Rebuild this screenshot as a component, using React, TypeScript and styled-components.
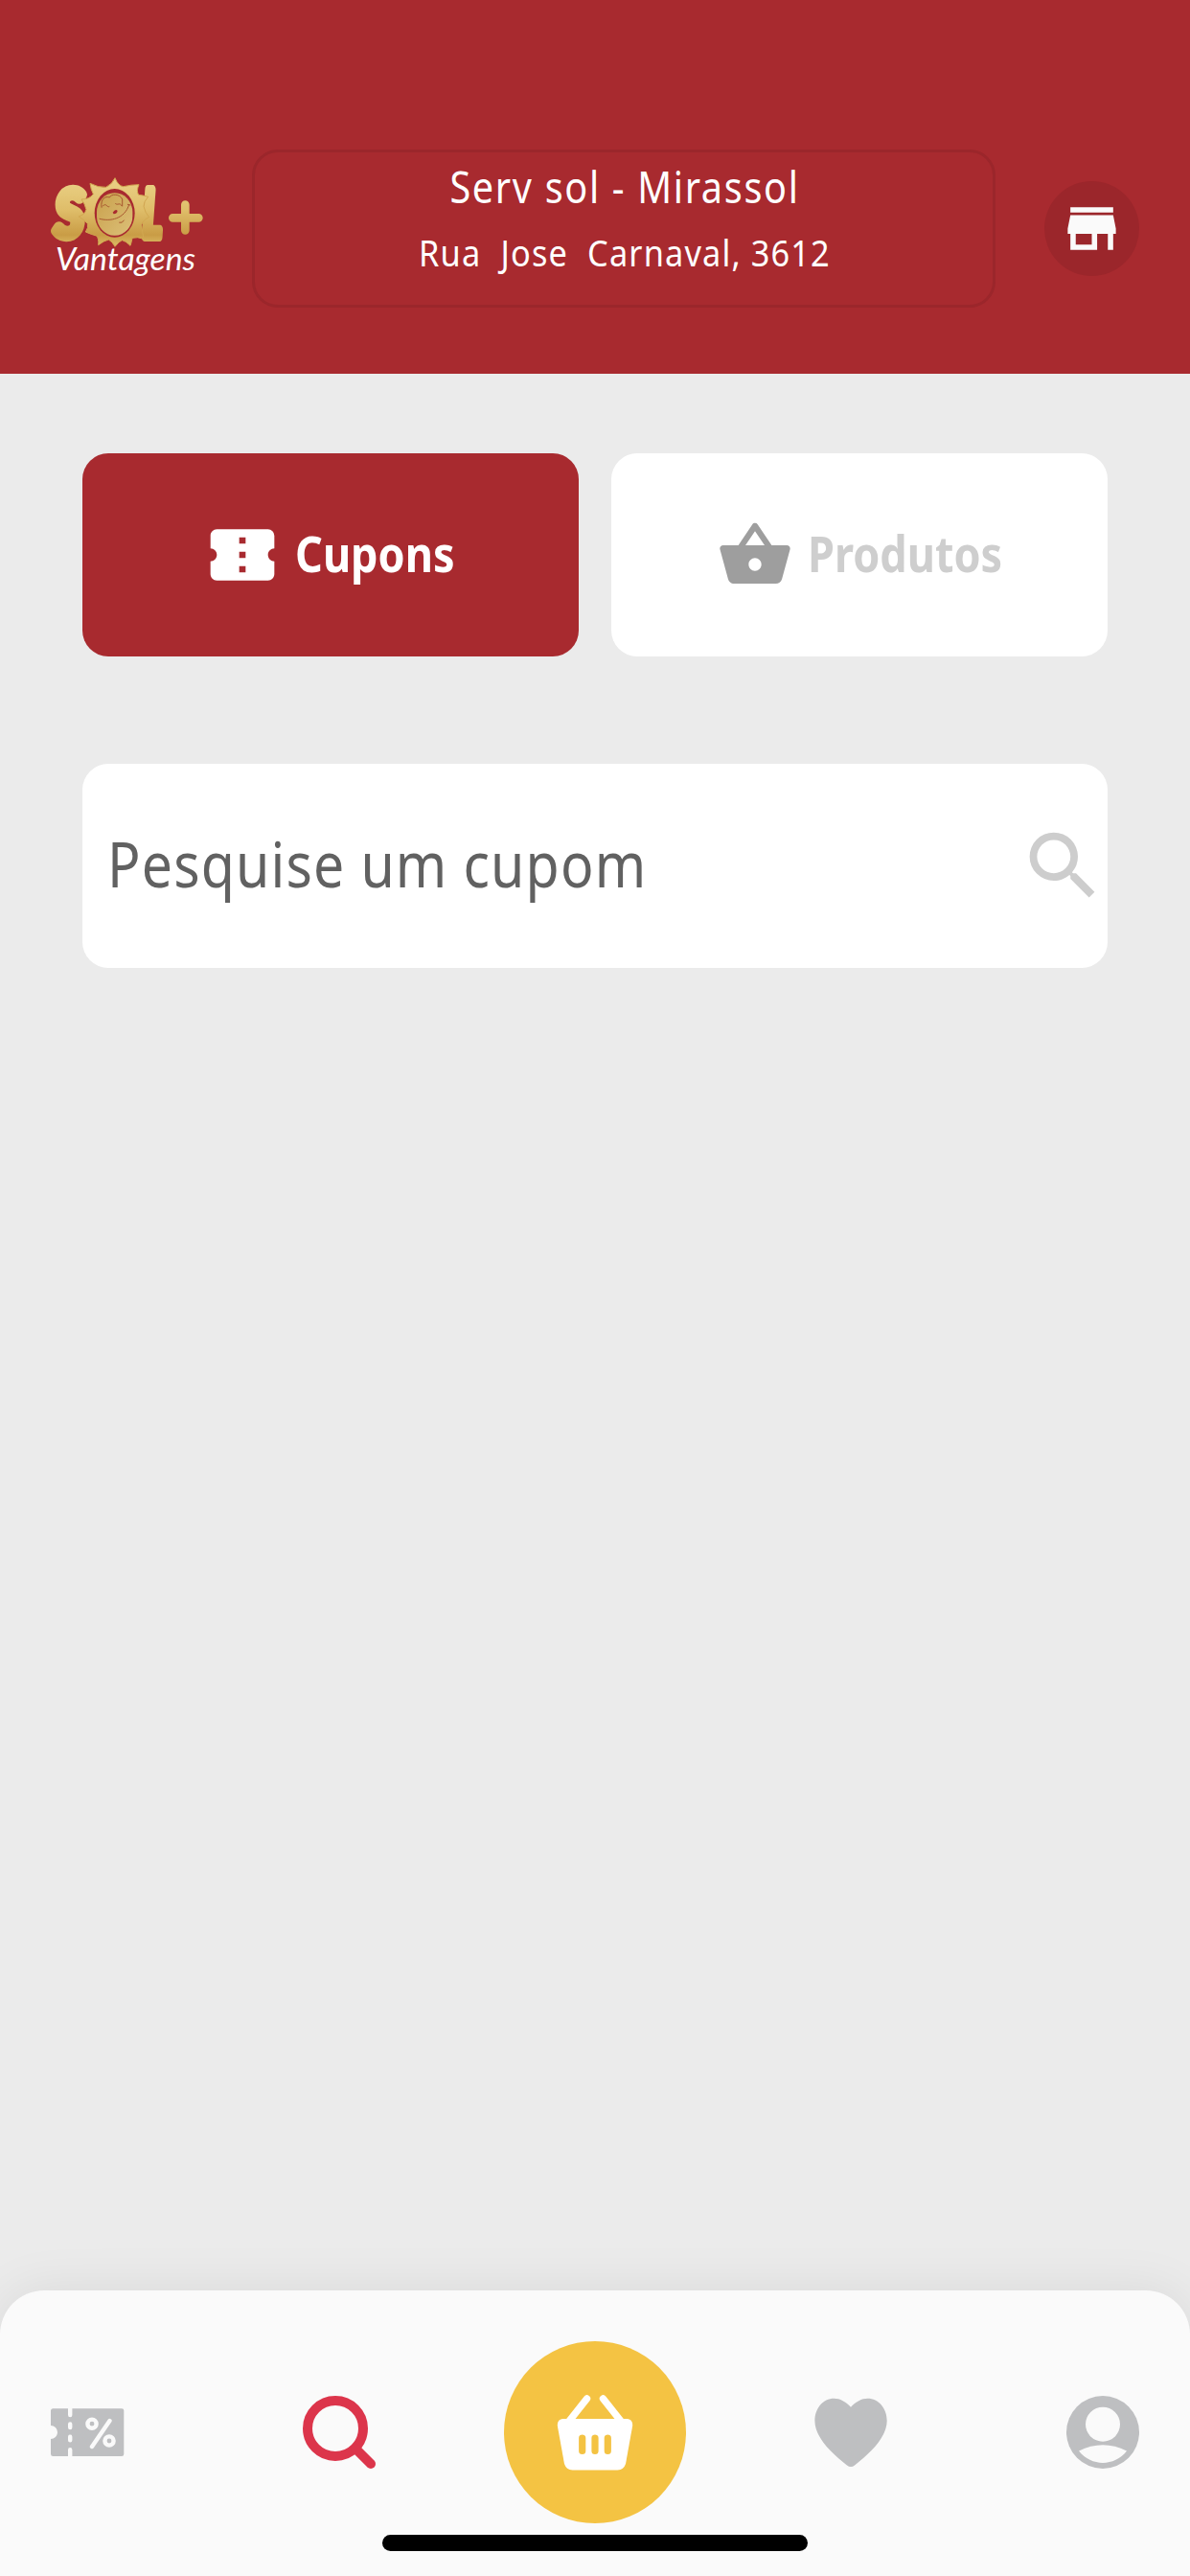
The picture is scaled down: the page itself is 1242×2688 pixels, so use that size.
import { FC } from 'react';
import styled, { createGlobalStyle } from 'styled-components';
import { MdConfirmationNumber, MdSearch, MdShoppingBasket, MdStore } from 'react-icons/md';

const colors = {
    primary: '#a82a2f',
    primaryDark: '#9b262b',
    background: '#ebebeb',
    surface: '#fafafa',
    accent: '#f4c343',
    active: '#dc354b',
    inactive: '#bebfc1',
};

const GlobalStyle = createGlobalStyle`
    * {
        box-sizing: border-box;
    }

    body {
        margin: 0;
        background: ${colors.background};
        font-family: 'Noto Sans', 'Open Sans', sans-serif;
    }
`;

const Screen = styled.div`
    display: flex;
    flex-direction: column;
    width: 1242px;
    height: 2688px;
    overflow: hidden;
    background: ${colors.background};
`;

const Header = styled.header`
    display: flex;
    align-items: flex-start;
    height: 389.5px;
    padding: 156px 53px 0 50px;
    background: ${colors.primary};
`;

const LogoLink = styled.a`
    display: flex;
    width: 166px;
    height: 115px;
    margin: 24px 47px 0 0;
`;

const StoreBox = styled.div`
    width: 776px;
    height: 165px;
    padding-left: 2px;
    border: 3px solid ${colors.primaryDark};
    border-radius: 27px;
    color: white;
    text-align: center;
    white-space: pre;
`;

const StoreName = styled.div`
    font-size: 45px;
    line-height: 72px;
    letter-spacing: 1.9px;
    transform: scaleX(0.88);
`;

const StoreAddress = styled.div`
    font-size: 39px;
    line-height: 63px;
    letter-spacing: 1.3px;
    transform: scaleX(0.88);
`;

const StoreButton = styled.button`
    display: flex;
    align-items: center;
    justify-content: center;
    width: 99px;
    height: 99px;
    margin: 33px 0 0 auto;
    padding: 0;
    border: none;
    border-radius: 50%;
    background: ${colors.primaryDark};
    color: ${colors.surface};
    font-size: 67px;
`;

const Content = styled.main`
    flex: 1;
    padding: 83px 86px 0;
`;

const Tabs = styled.div`
    display: grid;
    grid-template-columns: 1fr 1fr;
    gap: 34px;
`;

const Tab = styled.button<{ $active?: boolean }>`
    display: flex;
    align-items: center;
    justify-content: center;
    gap: 15px;
    height: 212.5px;
    padding: 0;
    border: none;
    border-radius: 27px;
    background: ${({ $active }) => ($active ? colors.primary : 'white')};
    color: ${({ $active }) => ($active ? 'white' : '#9e9e9e')};
    font-family: inherit;

    svg {
        flex: none;
        font-size: 80px;
    }
`;

const TabLabel = styled.span<{ $width: number; $color: string }>`
    width: ${({ $width }) => $width}px;
    padding-bottom: 4px;
    color: ${({ $color }) => $color};
    font-size: 52px;
    font-weight: 700;
    text-align: left;
    white-space: nowrap;
    transform: scaleX(0.865);
    transform-origin: left;
`;

const SearchField = styled.label`
    display: flex;
    align-items: center;
    justify-content: space-between;
    height: 212.5px;
    margin-top: 112px;
    padding-left: 26px;
    border-radius: 27px;
    background: white;
    color: #cdcdcd;
    font-size: 93px;
`;

const Placeholder = styled.span`
    padding-bottom: 5px;
    color: #616161;
    font-size: 65px;
    letter-spacing: 1.3px;
    white-space: nowrap;
    transform: scaleX(0.88);
    transform-origin: left;
`;

const BottomBar = styled.nav`
    display: flex;
    flex-direction: column;
    align-items: center;
    height: 298.5px;
    padding: 53px 53px 0;
    border-radius: 46px 46px 0 0;
    background: ${colors.surface};
    box-shadow: 0 0 54px rgba(0, 0, 0, 0.08);
`;

const NavItems = styled.div`
    display: flex;
    align-items: center;
    justify-content: space-between;
    width: 100%;
    height: 190px;
`;

const NavIcon = styled.svg.attrs({ viewBox: '0 0 76 76' })<{ $active?: boolean }>`
    width: 76px;
    height: 76px;
    overflow: visible;
    color: ${({ $active }) => ($active ? colors.active : colors.inactive)};
`;

const CartButton = styled.button`
    display: flex;
    align-items: center;
    justify-content: center;
    width: 190px;
    height: 190px;
    margin: 0 -53px;
    padding: 0;
    border: none;
    border-radius: 50%;
    background: ${colors.accent};
`;

const HomeIndicator = styled.div`
    width: 444px;
    height: 16.5px;
    margin-top: 12.5px;
    border-radius: 9px;
    background: black;
`;

const Logo: FC = () => (
    <svg width="166" height="115" viewBox="0 0 498 345">
        <defs>
            <linearGradient id="gold" gradientUnits="userSpaceOnUse" x1="0" y1="30" x2="0" y2="225">
                <stop offset="0" stopColor="#e9cf83" />
                <stop offset="0.45" stopColor="#dfbd69" />
                <stop offset="0.85" stopColor="#c99c45" />
                <stop offset="1" stopColor="#d9b862" />
            </linearGradient>
            <linearGradient id="face" x1="0" y1="0" x2="1" y2="1">
                <stop offset="0" stopColor="#c9a04c" />
                <stop offset="1" stopColor="#dcc078" />
            </linearGradient>
        </defs>
        <g fontFamily="Lato, sans-serif" fontWeight="700" fontSize="200" fontStyle="italic" fill="url(#gold)" stroke="url(#gold)" strokeLinejoin="round">
            <text x="22" y="202" strokeWidth="28" textLength="90" lengthAdjust="spacingAndGlyphs">S</text>
            <text x="298" y="202" strokeWidth="30" textLength="58" lengthAdjust="spacingAndGlyphs">L</text>
        </g>
        <path
            d="M210 17Q220 42 236 44Q262 38 285 38Q276 58 284 70Q300 72 314 76Q300 90 300 106Q304 126 317 140Q298 148 293 164Q296 188 300 208Q280 200 264 205Q262 218 258 229Q244 214 232 212Q222 216 210 232Q202 216 190 210Q174 214 158 227Q160 206 152 198Q136 194 118 186Q128 172 124 160Q112 146 96 138Q116 132 120 116Q116 98 105 84Q130 84 142 68Q134 52 132 34Q158 48 182 46Q202 36 210 17Z"
            fill="url(#gold)"
            stroke="#d2a851"
            strokeWidth="3"
            strokeLinejoin="round"
        />
        <ellipse cx="209" cy="127" rx="63" ry="76" fill={colors.primary} />
        <rect x="153" y="64" width="112" height="133" rx="55" ry="60" fill="url(#face)" />
        <g fill="none" stroke="#a8572f" strokeWidth="3" strokeLinecap="round">
            <path d="M168 109C164 82 180 73 193 78C198 66 226 66 233 84L233 105" />
            <path d="M172 105C182 92 186 112 192 107M212 98C220 104 224 92 231 104" />
            <path d="M162 145C195 154 240 146 254 101M250 100L258 102" />
            <path d="M224 157Q233 160 238 150" />
        </g>
        <path d="M203 125Q212 112 218 120Q216 130 206 130Z" fill={colors.primary} />
        <path d="M430 101V181M391 142H472" stroke="url(#gold)" strokeWidth="26" strokeLinecap="round" />
        <text x="24" y="307" fontFamily="Lato, cursive" fontStyle="italic" fontSize="100" fill="white" textLength="438" lengthAdjust="spacingAndGlyphs">
            Vantagens
        </text>
    </svg>
);

const CouponIcon: FC = () => (
    <NavIcon>
        <path
            fill="currentColor"
            d="M2 13.3H18V20a2.2 2.2 0 0 0 4.4 0V13.3H74a2.3 2.3 0 0 1 2.3 2.3V60.7A2.3 2.3 0 0 1 74 63H22.4V56.3a2.2 2.2 0 0 0-4.4 0V63H2.3A2.3 2.3 0 0 1 0 60.7V45A6.7 6.7 0 0 0 0 31V15.6A2.3 2.3 0 0 1 2 13.3Z"
        />
        <path d="M20.2 29.5V33M20.2 42.8V46.3M61.5 26L43 53" stroke={colors.surface} strokeWidth="4.4" strokeLinecap="round" />
        <g fill="none" stroke={colors.surface} strokeWidth="4.4">
            <circle cx="43" cy="29.2" r="4.6" />
            <circle cx="61" cy="47" r="4.6" />
        </g>
    </NavIcon>
);

const SearchIcon: FC = () => (
    <NavIcon $active>
        <g fill="none" stroke="currentColor" strokeWidth="10">
            <circle cx="34" cy="34" r="29" />
            <path d="M55 55L71 71" strokeLinecap="round" />
        </g>
    </NavIcon>
);

const BasketIcon: FC = () => (
    <svg width="80" height="80" viewBox="0 0 80 80">
        <path d="M12.5 29L31.5 5M67.5 29L48.5 5" stroke="white" strokeWidth="7.4" strokeLinecap="round" />
        <path d="M6 26H74Q79.5 27 79.2 33L72 73Q70 79 63.5 79.5H16.5Q10 79 8 73L.8 33Q.5 27 6 26Z" fill="white" />
        <path d="M26.7 46V59.5M40 46V59.5M53.3 46V59.5" stroke={colors.accent} strokeWidth="7.2" strokeLinecap="round" />
    </svg>
);

const HeartIcon: FC = () => (
    <NavIcon>
        <path
            fill="currentColor"
            d="M38 11.8C33 6 26.5 2.7 20.5 2.7C9 2.7 .4 13 .4 26C.4 43 17 59 34 72.5Q38 75.5 42 72.5C59 59 75.7 43 75.7 26C75.7 13 67 2.7 55.5 2.7C49.5 2.7 43 6 38 11.8Z"
        />
    </NavIcon>
);

const ProfileIcon: FC = () => (
    <NavIcon>
        <circle cx="38" cy="38" r="38" fill="currentColor" />
        <circle cx="38" cy="29.7" r="18" fill={colors.surface} />
        <path d="M13 57.5Q38 45 63 57.5C50 74 26 74 13 57.5Z" fill={colors.surface} />
    </NavIcon>
);

const App: FC = () => (
    <Screen>
        <GlobalStyle />
        <Header>
            <LogoLink>
                <Logo />
            </LogoLink>
            <StoreBox>
                <StoreName>Serv sol - Mirassol</StoreName>
                <StoreAddress>Rua  Jose  Carnaval, 3612</StoreAddress>
            </StoreBox>
            <StoreButton>
                <MdStore />
            </StoreButton>
        </Header>
        <Content>
            <Tabs>
                <Tab $active>
                    <MdConfirmationNumber />
                    <TabLabel $width={170} $color="white">Cupons</TabLabel>
                </Tab>
                <Tab>
                    <MdShoppingBasket />
                    <TabLabel $width={203} $color="#cecece">Produtos</TabLabel>
                </Tab>
            </Tabs>
            <SearchField>
                <Placeholder>Pesquise um cupom</Placeholder>
                <MdSearch />
            </SearchField>
        </Content>
        <BottomBar>
            <NavItems>
                <CouponIcon />
                <SearchIcon />
                <CartButton>
                    <BasketIcon />
                </CartButton>
                <HeartIcon />
                <ProfileIcon />
            </NavItems>
            <HomeIndicator />
        </BottomBar>
    </Screen>
);

export default App;
